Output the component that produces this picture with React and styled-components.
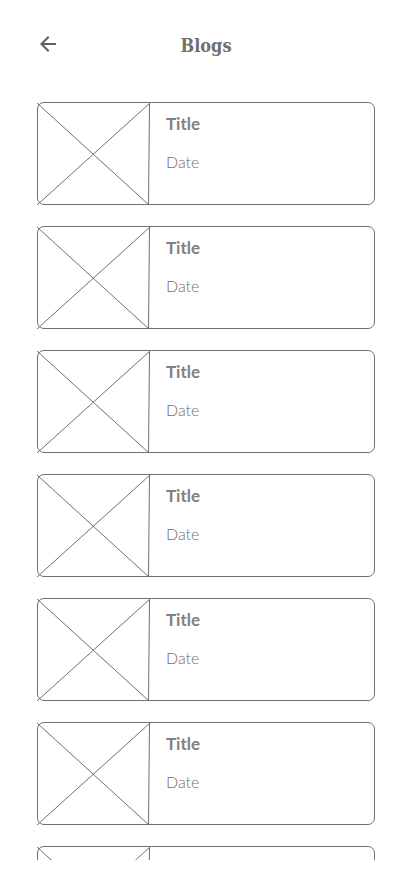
import React from "react";
import styled, { createGlobalStyle } from "styled-components";

const GlobalStyle = createGlobalStyle`
  *, *::before, *::after { box-sizing: border-box; }
  body { margin: 0; background: #fff; }
`;

const Page = styled.div`
  display: flex;
  flex-direction: column;
  height: 100vh;
  padding-bottom: 10px;
  font-family: Lato, "Open Sans", sans-serif;
  color: #707070;
`;

const Header = styled.header`
  display: grid;
  grid-template-columns: 24px 1fr 24px;
  align-items: center;
  flex: none;
  height: 88px;
  padding: 0 36px;
`;

const BackButton = styled.button`
  display: flex;
  width: 24px;
  height: 24px;
  padding: 0;
  border: 0;
  background: none;
  color: #606060;
  cursor: pointer;
`;

const Heading = styled.h1`
  margin: 0;
  padding-top: 4px;
  font: 700 18px/24px "DejaVu Serif Condensed", "DejaVu Serif", serif;
  text-align: center;
`;

const List = styled.ul`
  display: flex;
  flex-direction: column;
  flex: 1;
  gap: 21px;
  min-height: 0;
  margin: 0;
  padding: 14px 37px;
  overflow-y: auto;
  scrollbar-width: none;
  list-style: none;
`;

const Card = styled.li`
  display: flex;
  flex: none;
  height: 103px;
  border: 1px solid #707070;
  border-radius: 7px;
`;

const Placeholder = styled.svg`
  flex: none;
  width: 113px;
  height: 103px;
  margin: -1px;
  overflow: visible;
  fill: none;
  stroke: #707070;
`;

const Details = styled.div`
  padding: 9px 17px;
`;

const Title = styled.h2`
  margin: 0;
  font-size: 17px;
  font-weight: 700;
  line-height: 24px;
  color: #808184;
`;

const DateText = styled.p`
  margin: 14px 0 0;
  font-size: 16px;
  font-weight: 300;
  line-height: 24px;
  color: #707070;
`;

const blogs = Array.from({ length: 7 }, (_, id) => ({ id, title: "Title", date: "Date" }));

function BlogCard({ title, date }) {
  return (
    <Card>
      <Placeholder viewBox="0 0 113 103" aria-hidden="true">
        <path d="M0 1 112 103M0 103 113 1" />
        <path d="M112.5 1 111.5 103" />
      </Placeholder>
      <Details>
        <Title>{title}</Title>
        <DateText>{date}</DateText>
      </Details>
    </Card>
  );
}

export default function App() {
  return (
    <Page>
      <GlobalStyle />
      <Header>
        <BackButton type="button" aria-label="Back">
          <svg width="24" height="24" viewBox="0 0 24 24" fill="currentColor" aria-hidden="true">
            <path d="M20 11H7.83l5.59-5.59L12 4l-8 8 8 8 1.41-1.41L7.83 13H20v-2z" />
          </svg>
        </BackButton>
        <Heading>Blogs</Heading>
      </Header>
      <List>
        {blogs.map((blog) => (
          <BlogCard key={blog.id} title={blog.title} date={blog.date} />
        ))}
      </List>
    </Page>
  );
}
